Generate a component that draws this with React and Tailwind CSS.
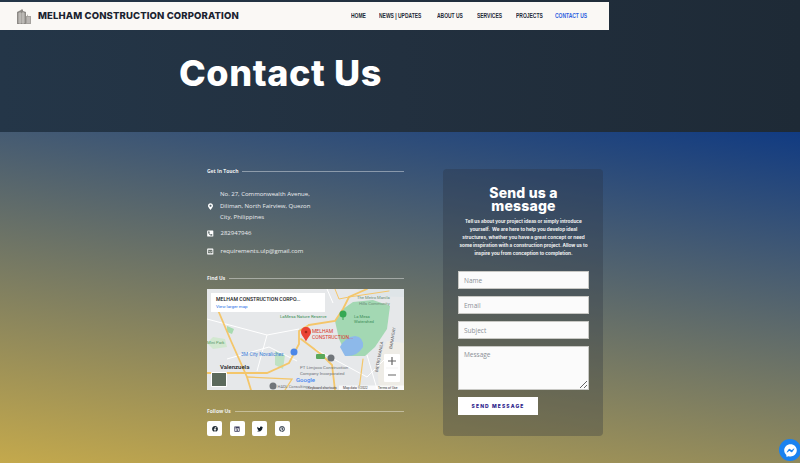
import React from "react";
import { FaFacebook, FaLinkedin, FaTwitter, FaPinterest, FaFacebookMessenger, FaMapMarkerAlt, FaPhoneSquareAlt, FaEnvelopeSquare } from "react-icons/fa";

const open = "font-['Open_Sans',sans-serif]";
const head = "font-['Inter',sans-serif]";
const R = "Roboto, sans-serif";

function Logo() {
  return (
    <svg width="16" height="17" viewBox="0 0 16 17" className="shrink-0">
      <path d="M1 16V4l4-2 1-1 1 1v1l3 1v12z" fill="#8d8a86" />
      <path d="M10 16V8h1V6l1 2h3v8z" fill="#a5a29e" />
      <g stroke="#e8e6e2" strokeWidth=".6">
        <path d="M2 6h7M2 8h7M2 10h7M2 12h7M2 14h7M11 10h3M11 12h3M11 14h3" />
        <path d="M4 4v12M7 4v12" />
      </g>
    </svg>
  );
}

function Heading({ children }) {
  return (
    <div className="flex items-center gap-[4px] h-[6px]">
      <span className={`${open} text-[5px] font-bold text-[#eef0f0] whitespace-nowrap leading-none`}>{children}</span>
      <span className="flex-1 h-px bg-white/40" />
    </div>
  );
}

function Field({ label }) {
  return (
    <input
      readOnly
      placeholder={label}
      className={`${open} block w-[131px] h-[18px] bg-[#fbfbfb] border border-[#c8c8c4] px-[5px] text-[6.5px] placeholder:text-[#8a8f96] outline-none`}
    />
  );
}

function Map() {
  return (
    <svg viewBox="0 0 197 101" width="197" height="101" className="block">
      <rect width="197" height="101" fill="#e6e8ea" />
      <path d="M128 32 L136 20 L146 13 L166 11 L183 17 L180 40 L168 58 L158 67 L140 67 L132 50z" fill="#a3d8b3" />
      <path d="M133 58 Q138 48 148 47 Q157 48 156 58 Q150 68 138 67z" fill="#8db9ea" />
      <path d="M0 54 L6 48 L18 50 L20 58 L6 60z" fill="#d2e8d0" />
      <path d="M68 62 L78 66 L76 80 L68 76z" fill="#bfe2c3" />
      <path d="M20 37 L27 40 L25 45 L20 43z" fill="#a8dbb1" />
      <path d="M180 52 L197 54 L197 101 L172 101 L170 74z" fill="#eeece6" />
      <path d="M150 0 L197 0 L197 8 L160 7z" fill="#dfe5e8" />
      <g fill="none" stroke="#fff" strokeWidth="1">
        <path d="M0 30 L60 46 L92 40" />
        <path d="M60 46 L50 82" />
        <path d="M108 60 L160 88 L178 70" />
        <path d="M160 66 L170 100" />
        <path d="M20 70 L62 58 L90 72" />
        <path d="M120 0 L126 14" />
      </g>
      <g fill="none" stroke="#f4c66a" strokeLinecap="round">
        <path d="M8 14 L24 52 L40 88 L44 101" strokeWidth="1.8" />
        <path d="M0 84 L60 84 L82 74 L92 55 L92 42 L102 36" strokeWidth="1.8" />
        <path d="M94 50 L115 66 L125 76 L128 101" strokeWidth="1.8" />
        <path d="M102 36 L128 32 L136 20 L142 8 L160 0" strokeWidth="1.8" />
        <path d="M40 88 L85 90 L78 101" strokeWidth="1.3" />
        <path d="M142 8 L182 2" strokeWidth="1" />
        <path d="M128 0 L132 10 L142 8" strokeWidth="1" />
        <path d="M156 70 L152 101" strokeWidth="1.2" />
      </g>
      <rect x="109" y="65" width="9" height="5" rx="1" fill="#5aa85a" />
      <rect x="4" y="4" width="114" height="19" fill="#fff" />
      <text x="9" y="11.500" fontSize="5.200" fontFamily={R} fontWeight="500" fill="#202124">MELHAM CONSTRUCTION CORPO...</text>
      <text x="9" y="19" fontSize="4.400" fontFamily={R} fill="#1a73e8">View larger map</text>
      <path d="M99 38 C96 38 94 40 94 43 C94 46 97.500 49 99 52.500 C100.500 49 104 46 104 43 C104 40 102 38 99 38z" fill="#ea4335" />
      <circle cx="99" cy="43" r="1.300" fill="#a52714" />
      <text x="105" y="44" fontSize="5" fontFamily={R} fill="#d9352b">MELHAM</text>
      <text x="105" y="49.500" fontSize="5" fontFamily={R} fill="#d9352b">CONSTRUCTION...</text>
      <circle cx="136" cy="25" r="3.500" fill="#34a853" />
      <path d="M136 28 v3" stroke="#34a853" />
      <text x="73" y="29" fontSize="4.400" fontFamily={R} fill="#3b8e55">LaMesa Nature Reserve</text>
      <text x="150" y="10" fontSize="4.200" fontFamily={R} fill="#6a8f78">The Metro Manila</text>
      <text x="152" y="16" fontSize="4.200" fontFamily={R} fill="#6a8f78">Hills Community</text>
      <text x="147" y="29" fontSize="4.200" fontFamily={R} fill="#3f8f5a">La Mesa</text>
      <text x="147" y="34" fontSize="4.200" fontFamily={R} fill="#3f8f5a">Watershed</text>
      <text x="34" y="67" fontSize="5" fontFamily={R} fill="#3c7ed8">3M City Novaliches</text>
      <circle cx="87" cy="63" r="3.500" fill="#4a86e8" />
      <text x="0" y="55" fontSize="4.200" fontFamily={R} fill="#5a9a68">Mini Park</text>
      <text x="13" y="80" fontSize="6" fontFamily={R} fontWeight="500" fill="#202124">Valenzuela</text>
      <circle cx="124" cy="69" r="3.500" fill="#70757a" />
      <text x="93" y="80" fontSize="4.400" fontFamily={R} fill="#70757a">PT Limjoco Construction</text>
      <text x="93" y="86" fontSize="4.400" fontFamily={R} fill="#70757a">Company Incorporated</text>
      <circle cx="66" cy="97" r="3.500" fill="#70757a" />
      <text x="70.500" y="98.500" fontSize="4" fontFamily={R} fill="#70757a">HADL Consulting</text>
      <text x="171" y="83" fontSize="4.200" fontFamily={R} fill="#5f6368" transform="rotate(-80 171 83)">METRO MANILA</text>
      <text x="185" y="60" fontSize="4.200" fontFamily={R} fill="#5f6368" transform="rotate(-80 185 60)">BARANGAY</text>
      <text x="89" y="92.500" fontSize="6" fontFamily={R} fontWeight="500" fill="#4285f4">Google</text>
      <rect x="4" y="83" width="16" height="15" rx="1" fill="#fff" />
      <rect x="5" y="84" width="14" height="13" fill="#5c6a5c" />
      <rect x="177" y="65" width="16" height="28" rx="1" fill="#fff" />
      <path d="M181 72h8M185 68v8M181 86h8" stroke="#666" strokeWidth="1.200" />
      <path d="M179 79h12" stroke="#e5e5e5" strokeWidth=".5" />
      <rect x="132" y="96.500" width="65" height="4.500" fill="#fff" opacity=".75" />
      <text x="101" y="100" fontSize="3.300" fontFamily={R} fill="#333">Keyboard shortcuts</text>
      <text x="136" y="100" fontSize="3.300" fontFamily={R} fill="#333">Map data ©2022</text>
      <text x="171" y="100" fontSize="3.300" fontFamily={R} fill="#333">Terms of Use</text>
    </svg>
  );
}

const navItems = [
  ["HOME", "w-[15px]", "text-[#1f2a38]"],
  ["NEWS | UPDATES", "w-[44px]", "text-[#1f2a38]"],
  ["ABOUT US", "w-[27px]", "text-[#1f2a38]"],
  ["SERVICES", "w-[25px]", "text-[#1f2a38]"],
  ["PROJECTS", "w-[26px]", "text-[#1f2a38]"],
  ["CONTACT US", "w-[32px]", "text-[#2f5fe0]"],
];

export default function App() {
  const inputs = ["Name", "Email", "Subject"];
  const socials = [
    [FaFacebook, "#1f2a33"],
    [FaLinkedin, "#3b3b5c"],
    [FaTwitter, "#14202b"],
    [FaPinterest, "#4b5563"],
  ];
  return (
    <div className="relative w-[800px] h-[463px] overflow-hidden">
      <header className="h-[132px] bg-[linear-gradient(90deg,#243648,#22303f_50%,#1e2a36)] pt-[2px]">
        <nav className="w-[609px] h-[28px] bg-[#faf8f5] flex items-center pl-[16px]">
          <Logo />
          <span className={`${head} ml-[6px] text-[9.5px] font-extrabold tracking-[0.13px] text-[#1b2330] whitespace-nowrap`}>
            MELHAM CONSTRUCTION CORPORATION
          </span>
          <ul className="ml-auto mr-[22px] flex gap-[13.5px] font-['Liberation_Sans',sans-serif] text-[8px] font-bold">
            {navItems.map(([n, w, c]) => (
              <li key={n} className={`${w} ${c} whitespace-nowrap`}>
                <span className="inline-block origin-left scale-x-[0.62]">{n}</span>
              </li>
            ))}
          </ul>
        </nav>
        <h1 className={`${head} ml-[179px] mt-[20px] text-[36px] leading-[46px] font-extrabold tracking-[0.6px] text-white`}>Contact Us</h1>
      </header>

      <main className="h-[331px] bg-[linear-gradient(189.600deg,#113b82_0%,#c4a94c_100%)] flex pl-[207px]">
        <section className="w-[197px] pt-[36px]">
          <Heading>Get In Touch</Heading>
          <div className={`${open} text-[6px] font-medium text-[#eceef0]`}>
            <div className="mt-[15px] flex items-center gap-[8px] leading-[11.7px]">
              <FaMapMarkerAlt className="w-[5px] h-[7px] text-white shrink-0 ml-px" />
              <p className="w-[100px] -ml-px">No. 27, Commonwealth Avenue, Diliman, North Fairview, Quezon City, Philippines</p>
            </div>
            <div className="mt-[5px] flex items-center gap-[7px] h-[9px]">
              <FaPhoneSquareAlt className="w-[6.5px] h-[7px] text-white shrink-0" />
              <span>282947946</span>
            </div>
            <div className="mt-[9px] flex items-center gap-[7px] h-[9px]">
              <FaEnvelopeSquare className="w-[6.5px] h-[7px] text-white shrink-0" />
              <span>requirements.ulp@gmail.com</span>
            </div>
          </div>
          <div className="mt-[19px]"><Heading>Find Us</Heading></div>
          <div className="mt-[8px]"><Map /></div>
          <div className="mt-[18px]"><Heading>Follow Us</Heading></div>
          <div className="mt-[7px] flex gap-[7.5px]">
            {socials.map(([Icon, c], i) => (
              <span key={i} className="w-[15px] h-[15px] bg-white rounded-[2px] flex items-center justify-center" style={{ color: c }}>
                <Icon className="w-[6px] h-[6px]" />
              </span>
            ))}
          </div>
        </section>

        <section className="ml-[39px] mt-[37px] w-[160px] h-[267px] rounded-[4px] bg-[#28303c]/30 pl-[15px] pr-[14px] pt-[17px]">
          <h2 className={`${head} text-center text-[14px] leading-[13px] font-extrabold tracking-[0.2px] text-white`}>Send us a message</h2>
          <p className={`${head} mt-[5px] -ml-[1px] w-[133px] text-center text-[4.700px] leading-[8.100px] font-bold text-[#f2f2f2]`}>
            Tell us about your project ideas or simply introduce yourself. &nbsp;We are here to help you develop ideal structures, whether you have a great concept or need some inspiration with a construction project. Allow us to inspire you from conception to completion.
          </p>
          <form className="mt-[14px] flex flex-col gap-[7px]">
            {inputs.map((l) => <Field key={l} label={l} />)}
            <textarea
              readOnly
              placeholder="Message"
              className={`${open} block w-[131px] h-[44px] bg-[#fbfbfb] border border-[#c8c8c4] px-[5px] py-[3px] text-[6.5px] placeholder:text-[#8a8f96] outline-none`}
            />
            <button type="button" className={`${head} w-[80px] h-[18px] bg-white text-[5px] font-extrabold tracking-[1.1px] text-[#2b1a8a]`}>
              SEND MESSAGE
            </button>
          </form>
        </section>
      </main>

      <div className="absolute right-[-1px] bottom-[2px] w-[22px] h-[22px] rounded-full bg-[#1a82f0] flex items-center justify-center">
        <FaFacebookMessenger className="w-[13px] h-[13px] text-white" />
      </div>
    </div>
  );
}
